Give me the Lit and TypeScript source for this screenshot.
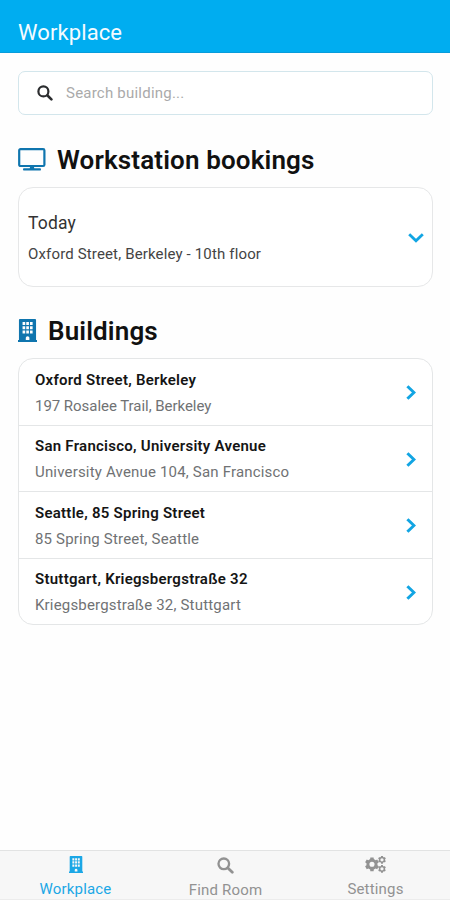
import { LitElement, html, css, svg } from "lit";
import { customElement, property } from "lit/decorators.js";

const cog = (cx: number, cy: number, r: number, teeth: number, hole: number) => {
  const pts: string[] = [];
  const step = (Math.PI * 2) / teeth;
  for (let i = 0; i < teeth; i++) {
    const a = i * step + step / 2;
    for (const [o, k] of [[-0.32, 0.78], [-0.22, 1], [0.22, 1], [0.32, 0.78]]) {
      pts.push(`${(cx + Math.cos(a + o * step) * r * k).toFixed(2)} ${(cy + Math.sin(a + o * step) * r * k).toFixed(2)}`);
    }
  }
  return `M${pts.join("L")}ZM${cx - hole} ${cy}a${hole} ${hole} 0 1 0 ${hole * 2} 0a${hole} ${hole} 0 1 0 ${-hole * 2} 0Z`;
};

const icons: Record<string, { box: string; body: unknown }> = {
  building: {
    box: "0 0 20 24",
    body: svg`<path fill="currentColor" fill-rule="evenodd" d="M2 0H18Q19 0 19 1V22H20V24H0V22H1V1Q1 0 2 0ZM4.8 3V6.2H7.6V3ZM8.7 3V6.2H11.5V3ZM12.6 3V6.2H15.4V3ZM4.8 7.5V10.7H7.6V7.5ZM8.7 7.5V10.7H11.5V7.5ZM12.6 7.5V10.7H15.4V7.5ZM4.8 12V15.2H7.6V12ZM8.7 12V15.2H11.5V12ZM12.6 12V15.2H15.4V12ZM8.2 22V19.6Q8.2 18 10.1 18Q12 18 12 19.6V22Z"/>`,
  },
  monitor: {
    box: "0 0 28 24",
    body: svg`<rect x="1.2" y="1.2" width="25.2" height="16.8" rx="1.3" fill="none" stroke="currentColor" stroke-width="2.2"/><path fill="currentColor" d="M12.3 18h3.4l.6 2.2h5.9q.8 0 .8 1.2t-.8 1.1H5.8q-.8 0-.8-1.1t.8-1.2h5.9Z"/>`,
  },
  search: {
    box: "0 0 16 16",
    body: svg`<g fill="none" stroke="currentColor" stroke-width="2.2"><circle cx="6.4" cy="6.4" r="5"/><path stroke-width="2.6" stroke-linecap="round" d="M10.5 10.5L14.4 14.4"/></g>`,
  },
  down: {
    box: "0 0 16 10",
    body: svg`<path fill="none" stroke="currentColor" stroke-width="2.8" d="M1.2 1.2L8 7.8L14.8 1.2"/>`,
  },
  right: {
    box: "0 0 10 16",
    body: svg`<path fill="none" stroke="currentColor" stroke-width="3" d="M1.4 1.4L8 8L1.4 14.6"/>`,
  },
  gears: {
    box: "0 0 22 18",
    body: svg`<path fill="currentColor" fill-rule="evenodd" d=${cog(7.3, 8.8, 7.5, 6, 2.7)}/><path fill="currentColor" fill-rule="evenodd" d=${cog(17.8, 4, 4.2, 6, 1.7)}/><path fill="currentColor" fill-rule="evenodd" d=${cog(17.8, 13.6, 4.2, 6, 1.7)}/>`,
  },
};

@customElement("ui-icon")
class UiIcon extends LitElement {
  @property() name = "building";
  static styles = css`
    :host { display: block; flex: none; }
    svg { display: block; width: 100%; height: 100%; }
  `;
  render() {
    const icon = icons[this.name];
    return html`<svg viewBox=${icon.box} preserveAspectRatio="none" aria-hidden="true">${icon.body}</svg>`;
  }
}

const buildings = [
  ["Oxford Street, Berkeley", "197 Rosalee Trail, Berkeley"],
  ["San Francisco, University Avenue", "University Avenue 104, San Francisco"],
  ["Seattle, 85 Spring Street", "85 Spring Street, Seattle"],
  ["Stuttgart, Kriegsbergstraße 32", "Kriegsbergstraße 32, Stuttgart"],
];

@customElement("app-root")
class AppRoot extends LitElement {
  static styles = css`
    :host {
      display: flex;
      flex-direction: column;
      height: 900px;
      box-sizing: border-box;
      background: #fefefe;
      font-family: Roboto, "Liberation Sans", sans-serif;
      color: #111;
    }
    * { box-sizing: border-box; }
    header {
      height: 53px;
      flex: none;
      background: #00adf0;
      border-bottom: 1px solid #089cdb;
      color: #f4fbff;
      padding: 19px 18px 0;
      font-size: 22px;
      line-height: 28px;
      letter-spacing: 0.1px;
    }
    main { flex: 1; padding: 18px 17px 0 18px; }
    .search {
      height: 44px;
      border: 1.5px solid #d3e6ec;
      border-radius: 7px;
      display: flex;
      align-items: center;
      padding-left: 18px;
      gap: 13px;
      font-size: 15px;
      letter-spacing: 0.22px;
      color: #aaa;
      background: #fff;
    }
    .search ui-icon { width: 16px; height: 16px; color: #2b2d2f; }
    h2 {
      margin: 0;
      display: flex;
      align-items: center;
      height: 36px;
      font-size: 26px;
      font-weight: 600;
      letter-spacing: 0.14px;
    }
    h2 ui-icon { color: #0f75ae; }
    .stations { margin-top: 27px; gap: 11px; }
    .stations ui-icon { width: 28px; height: 24px; }
    .places { margin-top: 26px; gap: 11px; }
    .places ui-icon { width: 19px; height: 23px; margin-bottom: 2px; }
    .card {
      margin-top: 9px;
      height: 100px;
      border: 1.5px solid #e6e7e8;
      border-radius: 15px;
      display: flex;
      align-items: center;
      justify-content: space-between;
      padding: 6px 8px 0 9px;
      background: #fff;
    }
    .card ui-icon { width: 16px; height: 10px; margin-bottom: 4px; color: #12a5e3; }
    .day { font-size: 17.5px; line-height: 28px; letter-spacing: 0.15px; color: #333; }
    .where { font-size: 15px; line-height: 34px; letter-spacing: 0.15px; color: #444; }
    .list {
      margin-top: 9px;
      height: 267px;
      border: 1.5px solid #e4e6e7;
      border-radius: 15px;
      display: grid;
      grid-template-rows: 66px 66px 67px 66px;
      background: #fff;
    }
    .row {
      display: flex;
      align-items: center;
      justify-content: space-between;
      padding: 1px 16px 0;
    }
    .row + .row { border-top: 1.5px solid #e4e6e7; }
    .row ui-icon { width: 10px; height: 15px; color: #12a5e3; }
    .name { font-size: 15px; font-weight: 600; line-height: 26px; letter-spacing: 0.26px; color: #151515; }
    .address { font-size: 15px; line-height: 26px; letter-spacing: 0.18px; color: #707274; }
    .row:first-child .address { letter-spacing: -0.04px; }
    nav {
      height: 50px;
      flex: none;
      background: #f7f7f7;
      border-top: 1.5px solid #e2e3e3;
      border-bottom: 1px solid #ececec;
      display: grid;
      grid-template-columns: repeat(3, 1fr);
      color: #929292;
      font-size: 15px;
      letter-spacing: 0.18px;
    }
    .tab { display: flex; flex-direction: column; align-items: center; padding: 5px 0 0 1px; line-height: 18px; }
    .tab ui-icon { margin-bottom: 7px; }
    .active { color: #1ba7e6; }
    .active ui-icon { width: 14px; height: 17px; }
    .find { padding-top: 6px; }
    .find ui-icon { width: 17px; height: 17px; }
    .settings ui-icon { width: 21px; height: 17px; }
  `;

  render() {
    return html`
      <header>Workplace</header>
      <main>
        <div class="search"><ui-icon name="search"></ui-icon><span>Search building...</span></div>
        <h2 class="stations"><ui-icon name="monitor"></ui-icon><span>Workstation bookings</span></h2>
        <section class="card">
          <div>
            <div class="day">Today</div>
            <div class="where">Oxford Street, Berkeley - 10th floor</div>
          </div>
          <ui-icon name="down"></ui-icon>
        </section>
        <h2 class="places"><ui-icon name="building"></ui-icon><span>Buildings</span></h2>
        <section class="list">
          ${buildings.map(
            ([name, address]) => html`<div class="row">
              <div><div class="name">${name}</div><div class="address">${address}</div></div>
              <ui-icon name="right"></ui-icon>
            </div>`
          )}
        </section>
      </main>
      <nav>
        <div class="tab active"><ui-icon name="building"></ui-icon><span>Workplace</span></div>
        <div class="tab find"><ui-icon name="search"></ui-icon><span>Find Room</span></div>
        <div class="tab settings"><ui-icon name="gears"></ui-icon><span>Settings</span></div>
      </nav>
    `;
  }
}
